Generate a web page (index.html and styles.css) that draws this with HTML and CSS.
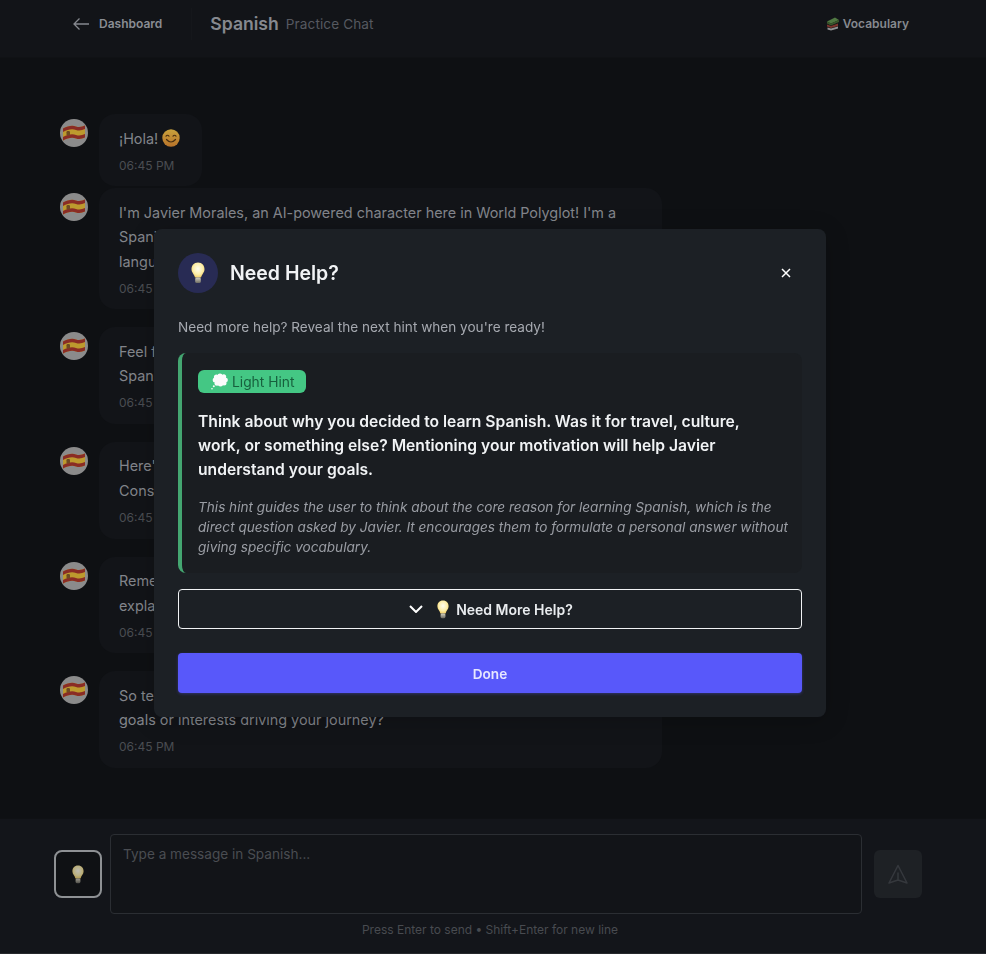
FILE: index.html
```html
<!DOCTYPE html>
<html lang="en">
<head>
<meta charset="utf-8">
<title>Spanish Practice Chat</title>
<link rel="stylesheet" href="styles.css">
</head>
<body>
<svg class="defs" width="0" height="0" aria-hidden="true">
  <defs>
    <radialGradient id="bulbGlow" cx="50%" cy="42%" r="62%">
      <stop offset="0" stop-color="#fffdf0"/>
      <stop offset=".6" stop-color="#fdeeaa"/>
      <stop offset="1" stop-color="#f2cc5e"/>
    </radialGradient>
    <linearGradient id="bulbBase" x1="0" y1="0" x2="0" y2="1">
      <stop offset="0" stop-color="#d8d4c2"/>
      <stop offset="1" stop-color="#6d6b62"/>
    </linearGradient>
    <linearGradient id="smileFill" x1="0" y1="0" x2="0" y2="1">
      <stop offset="0" stop-color="#c9a23c"/>
      <stop offset="1" stop-color="#b8732a"/>
    </linearGradient>
    <symbol id="flag" viewBox="0 0 24 18">
      <path d="M1 4.500C6 2 10 1 14 2.500C17 3.500 20 3 23 1.500V13.500C20 15 17 15.500 14 14.500C10 13 6 14 1 16.500Z" fill="#bd9a2e"/>
      <path d="M1 4.500C6 2 10 1 14 2.500C17 3.500 20 3 23 1.500V5C20 6.500 17 7 14 6C10 4.500 6 5.500 1 8Z" fill="#8a2c25"/>
      <path d="M1 13C6 10.500 10 9.500 14 11C17 12 20 11.500 23 10V13.500C20 15 17 15.500 14 14.500C10 13 6 14 1 16.500Z" fill="#8a2c25"/>
      <rect x="4.500" y="7" width="3.500" height="4.500" rx="1.200" fill="#6e4a22"/>
    </symbol>
    <symbol id="bulb" viewBox="0 0 16 22">
      <path d="M8 .5C3.800 .5 1.500 3.600 1.500 7.300C1.500 10.600 4 12 5 15.500H11C12 12 14.500 10.600 14.500 7.300C14.500 3.600 12.200 .5 8 .5Z" fill="url(#bulbGlow)"/>
      <rect x="5.200" y="15.500" width="5.600" height="5.500" rx="1.500" fill="url(#bulbBase)"/>
    </symbol>
    <symbol id="smile" viewBox="0 0 18 18">
      <circle cx="9" cy="9" r="8.700" fill="url(#smileFill)"/>
      <path d="M4 7.200Q5.500 5.200 7 7.200M11 7.200Q12.500 5.200 14 7.200" fill="none" stroke="#4a2f12" stroke-width="1.100" stroke-linecap="round"/>
      <path d="M4.500 10.500Q9 15.500 13.500 10.500" fill="none" stroke="#4a2f12" stroke-width="1.200" stroke-linecap="round"/>
    </symbol>
    <symbol id="cloud" viewBox="0 0 17 17">
      <g fill="#fbfbfb">
        <circle cx="5.500" cy="4" r="2.600"/><circle cx="9" cy="2.800" r="2.400"/><circle cx="12.700" cy="3.800" r="2.500"/>
        <circle cx="14.600" cy="7" r="2.300"/><circle cx="13" cy="10" r="2.500"/><circle cx="9.500" cy="11" r="2.500"/>
        <circle cx="6" cy="10.300" r="2.500"/><circle cx="4.200" cy="7" r="2.500"/><circle cx="9" cy="7" r="4.500"/>
        <circle cx="2.800" cy="13.300" r="1"/><circle cx="1" cy="15.700" r=".8"/>
      </g>
    </symbol>
    <symbol id="books" viewBox="0 0 14 14">
      <path d="M1 4.500L9 .5L13 3L5 6.500Z" fill="#5b8a4a"/>
      <path d="M1 4.500L5 6.500L13 3V5L5 8.500L1 6.500Z" fill="#41652f"/>
      <path d="M1 7.500L5 9L12 6.500V9L5 11L1 9.500Z" fill="#8e3a30"/>
      <path d="M1.500 10.500L5 11.500L12 9.500V11.500L5 13.500L1.500 12.500Z" fill="#a8a8a8"/>
    </symbol>
  </defs>
</svg>

<div class="app">
  <header class="topbar">
    <a class="back">
      <svg class="back-arrow" width="18" height="14" viewBox="0 0 18 14"><path d="M17 7H2M7.500 1.500L2 7L7.500 12.500"/></svg>
      <span>Dashboard</span>
    </a>
    <div class="divider"></div>
    <div class="title-group">
      <span class="title">Spanish</span>
      <span class="subtitle">Practice Chat</span>
    </div>
    <a class="vocab">
      <svg class="vocab-icon" width="14" height="14"><use href="#books"/></svg>
      <span>Vocabulary</span>
    </a>
  </header>

  <main class="messages">
    <div class="msg msg-tight">
      <div class="avatar"><svg class="flag" width="24" height="18"><use href="#flag"/></svg></div>
      <div class="bubble">
        <p class="msg-text">¡Hola! <svg class="smile" width="18" height="18"><use href="#smile"/></svg></p>
        <div class="msg-time">06:45 PM</div>
      </div>
    </div>
    <div class="msg">
      <div class="avatar"><svg class="flag" width="24" height="18"><use href="#flag"/></svg></div>
      <div class="bubble bubble-wide">
        <p class="msg-text">I'm Javier Morales, an AI-powered character here in World Polyglot! I'm a<br>Spanish tutor from Madrid, and I love helping people discover this beautiful<br>language and culture through real conversation.</p>
        <div class="msg-time">06:45 PM</div>
      </div>
    </div>
    <div class="msg">
      <div class="avatar"><svg class="flag" width="24" height="18"><use href="#flag"/></svg></div>
      <div class="bubble bubble-wide">
        <p class="msg-text">Feel free to ask me anything you want about learning and speaking<br>Spanish, from grammar and vocabulary to everyday phrases.</p>
        <div class="msg-time">06:45 PM</div>
      </div>
    </div>
    <div class="msg">
      <div class="avatar"><svg class="flag" width="24" height="18"><use href="#flag"/></svg></div>
      <div class="bubble bubble-wide">
        <p class="msg-text">Here's a tip to begin with: short daily practice beats long weekly sessions.<br>Consistency is what really builds your confidence over time.</p>
        <div class="msg-time">06:45 PM</div>
      </div>
    </div>
    <div class="msg">
      <div class="avatar"><svg class="flag" width="24" height="18"><use href="#flag"/></svg></div>
      <div class="bubble bubble-wide">
        <p class="msg-text">Remember that mistakes are part of the process, and I'm here to gently<br>explain anything that feels confusing along the way.</p>
        <div class="msg-time">06:45 PM</div>
      </div>
    </div>
    <div class="msg">
      <div class="avatar"><svg class="flag" width="24" height="18"><use href="#flag"/></svg></div>
      <div class="bubble bubble-wide">
        <p class="msg-text">So tell me, why did you decide to learn Spanish? Are there any particular<br>goals or interests driving your journey?</p>
        <div class="msg-time">06:45 PM</div>
      </div>
    </div>
  </main>

  <footer class="composer">
    <div class="composer-row">
      <button class="hint-btn"><svg class="hint-bulb" width="14" height="19"><use href="#bulb"/></svg></button>
      <div class="input-box">Type a message in Spanish...</div>
      <button class="send-btn">
        <svg class="send-icon" width="20" height="20" viewBox="0 0 20 20"><path d="M10 1.500L19 19L10 16L1 19ZM10 8.500V16"/></svg>
      </button>
    </div>
    <div class="composer-hint">Press Enter to send • Shift+Enter for new line</div>
  </footer>
</div>

<div class="overlay">
  <section class="modal">
    <div class="modal-head">
      <div class="modal-head-left">
        <div class="modal-icon"><svg width="16" height="22"><use href="#bulb"/></svg></div>
        <h2 class="modal-title">Need Help?</h2>
      </div>
      <button class="close-btn">
        <svg width="10" height="10" viewBox="0 0 10 10"><path d="M1 1L9 9M9 1L1 9"/></svg>
      </button>
    </div>
    <p class="modal-desc">Need more help? Reveal the next hint when you're ready!</p>
    <div class="hint-card">
      <div class="badge"><svg width="17" height="17"><use href="#cloud"/></svg><span>Light Hint</span></div>
      <p class="hint-main">Think about why you decided to learn Spanish. Was it for travel, culture,<br>work, or something else? Mentioning your motivation will help Javier<br>understand your goals.</p>
      <p class="hint-note">This hint guides the user to think about the core reason for learning Spanish, which is the<br>direct question asked by Javier. It encourages them to formulate a personal answer without<br>giving specific vocabulary.</p>
    </div>
    <button class="more-btn">
      <svg class="chevron" width="14" height="8" viewBox="0 0 14 8"><path d="M1 1L7 7L13 1"/></svg>
      <svg class="more-bulb" width="14" height="19"><use href="#bulb"/></svg>
      <span>Need More Help?</span>
    </button>
    <button class="done-btn">Done</button>
  </section>
</div>
</body>
</html>
```

FILE: styles.css
```css
* { box-sizing: border-box; }
html, body { margin: 0; height: 100%; }
body {
  background: #26282c;
  font-family: "Inter", "Liberation Sans", sans-serif;
  overflow: hidden;
}
.defs { position: absolute; }
p, h2 { margin: 0; }
button { font-family: inherit; cursor: pointer; }

.app {
  display: flex;
  flex-direction: column;
  height: 953px;
  background: #0e1013;
}

/* top bar */
.topbar {
  display: flex;
  align-items: center;
  height: 58px;
  padding: 0 77px 10px 72px;
  background: #121418;
  border-bottom: 1px solid #101215;
}
.back {
  display: flex;
  align-items: center;
  gap: 9px;
  font-size: 12px;
  font-weight: 600;
  color: #8a8d93;
}
.back-arrow { fill: none; stroke: #85888e; stroke-width: 1.300; }
.divider { width: 1px; height: 32px; margin: 0 18px 0 29px; background: #15171b; }
.title-group { display: flex; align-items: center; gap: 7px; flex: 1; }
.title { font-size: 17.600px; font-weight: 600; color: #86898f; }
.subtitle { font-size: 13.600px; color: #565960; letter-spacing: .1px; }
.vocab {
  display: flex;
  align-items: center;
  gap: 3px;
  font-size: 12px;
  font-weight: 600;
  color: #86898f;
}
.vocab-icon { opacity: .85; }

/* messages */
.messages {
  flex: 1;
  overflow: hidden;
  padding: 56px 0 0 60px;
}
.msg { display: flex; gap: 11px; margin-bottom: 18px; align-items: flex-start; }
.msg-tight { margin-bottom: 2px; }
.avatar {
  flex: none;
  display: flex;
  align-items: center;
  justify-content: center;
  width: 28px;
  height: 28px;
  margin-top: 5px;
  border-radius: 50%;
  background: #8b8b8b;
}
.bubble {
  padding: 12.500px 20px 10.500px;
  border-radius: 16px;
  background: #121418;
}
.bubble-wide { width: 563px; }
.msg-text {
  font-size: 14.400px;
  line-height: 24.480px;
  color: #82858b;
  white-space: nowrap;
}
.smile { vertical-align: -3px; margin-right: 2px; }
.msg-time {
  margin-top: 4.700px;
  font-size: 12px;
  line-height: 20px;
  color: #4a4d52;
}

/* composer */
.composer {
  height: 135px;
  padding: 15px 6px 0 0;
  background: #13151a;
  border-top: 1px solid #0f1114;
}
.composer-row {
  display: flex;
  align-items: center;
  padding: 0 58px 0 54px;
}
.hint-btn {
  display: flex;
  align-items: center;
  justify-content: center;
  width: 48px;
  height: 48px;
  padding: 0;
  background: #0f1114;
  border: 2px solid #8e9194;
  border-radius: 8px;
}
.hint-bulb { opacity: .72; }
.input-box {
  flex: 1;
  height: 80px;
  margin: 0 12px 0 8px;
  padding: 9px 12px;
  font-size: 13.600px;
  line-height: 20px;
  color: #4a4d52;
  background: #121418;
  border: 1px solid #2b2e33;
  border-radius: 4px;
}
.send-btn {
  display: flex;
  align-items: center;
  justify-content: center;
  width: 48px;
  height: 48px;
  padding: 0;
  background: #1e2125;
  border: 0;
  border-radius: 6px;
}
.send-icon { fill: none; stroke: #35383d; stroke-width: 1.500; stroke-linejoin: round; }
.composer-hint {
  margin-top: 6px;
  text-align: center;
  font-size: 12px;
  line-height: 20px;
  color: #484b50;
}

/* modal */
.overlay {
  position: fixed;
  top: 0;
  left: 0;
  right: 6px;
  bottom: 0;
  display: flex;
  align-items: center;
  justify-content: center;
  padding-bottom: 8px;
  backdrop-filter: blur(.7px);
}
.modal {
  width: 672px;
  padding: 24px;
  background: #1c2025;
  border-radius: 8px;
  box-shadow: 0 4px 24px rgba(0, 0, 0, .2);
}
.modal-head { display: flex; align-items: center; justify-content: space-between; }
.modal-head-left { display: flex; align-items: center; gap: 12px; }
.modal-icon {
  display: flex;
  align-items: center;
  justify-content: center;
  width: 40px;
  height: 40px;
  border-radius: 50%;
  background: #282b54;
}
.modal-title { font-size: 19.500px; line-height: 28px; font-weight: 600; color: #f1f3f5; }
.close-btn {
  display: flex;
  align-items: center;
  justify-content: center;
  width: 32px;
  height: 32px;
  padding: 0;
  background: none;
  border: 0;
}
.close-btn path { fill: none; stroke: #fff; stroke-width: 1.500; }
.modal-desc {
  margin: 24px 0 16px;
  font-size: 13.600px;
  line-height: 20px;
  color: #a6a9b0;
}
.hint-card {
  padding: 17px 16px 16px;
  background: #1a1d21;
  border-left: 4px solid #44a671;
  border-radius: 8px;
}
.badge {
  display: inline-flex;
  align-items: center;
  gap: 4px;
  height: 23px;
  padding: 0 12px 0 13px;
  vertical-align: top;
  font-size: 13.800px;
  color: #17603d;
  background: #44c784;
  border-radius: 6px;
}
.hint-main {
  margin-top: 17px;
  font-size: 15.650px;
  line-height: 24px;
  font-weight: 600;
  color: #f1f3f5;
}
.hint-note {
  margin-top: 15px;
  font-size: 13.600px;
  line-height: 20px;
  font-style: italic;
  color: #9a9da4;
  white-space: nowrap;
}
.more-btn {
  display: flex;
  align-items: center;
  justify-content: center;
  width: 100%;
  height: 40px;
  margin-top: 16px;
  padding: 0 0 0 2px;
  font-size: 14px;
  font-weight: 600;
  color: #e9ecef;
  background: none;
  border: 1px solid #f1f3f5;
  border-radius: 4px;
}
.chevron { fill: none; stroke: #fff; stroke-width: 2; margin-right: 13px; }
.more-bulb { margin-right: 6px; }
.done-btn {
  display: block;
  width: 100%;
  height: 40px;
  margin-top: 24px;
  padding: 2px 0 0;
  font-size: 13.600px;
  font-weight: 600;
  color: #e7e7ff;
  background: #5858fa;
  border: 0;
  border-radius: 4px;
  box-shadow: 0 1px 3px rgba(88, 88, 250, .35);
}
```
